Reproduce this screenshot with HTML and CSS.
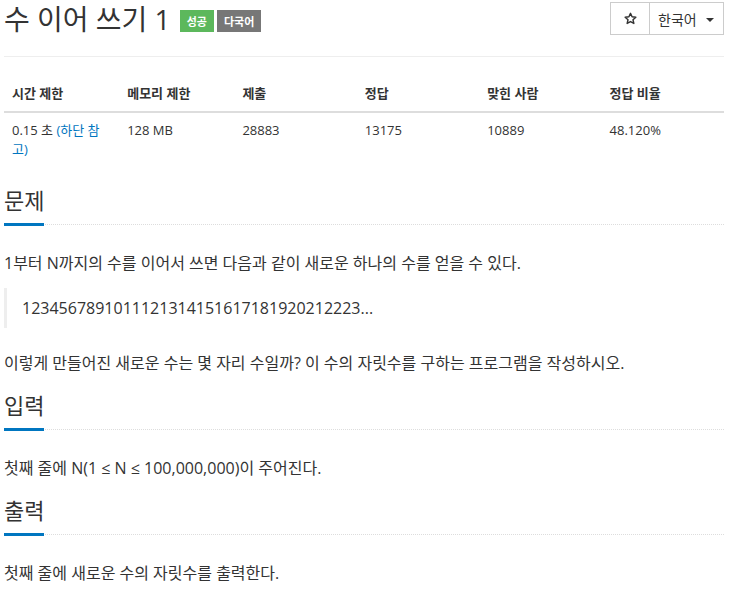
FILE: index.html
```html
<!DOCTYPE html>
<html lang="ko">
<head>
    <meta charset="UTF-8">
    <meta name="viewport" content="width=device-width, initial-scale=1.0">
    <title>수 이어 쓰기 1</title>
    <link rel="stylesheet" href="styles.css">
</head>
<body>
    <div class="page">
        <div class="page-header">
            <h1 class="title">
                <span id="problem_title">수 이어 쓰기 1</span>
                <span class="labels">
                    <span class="label label-success">성공</span>
                    <span class="label label-default">다국어</span>
                </span>
            </h1>
            <div class="btn-group">
                <button class="btn btn-star" title="즐겨찾기">
                    <svg width="13" height="13" viewBox="0 0 24 24">
                        <path d="M12 2.5l2.9 6.4 7 .7-5.3 4.7 1.6 6.9L12 17.6l-6.2 3.6 1.6-6.9-5.3-4.7 7-.7z" fill="none" stroke="#333" stroke-width="2.6" stroke-linejoin="round"/>
                    </svg>
                </button>
                <button class="btn btn-lang">한국어 <span class="caret"></span></button>
            </div>
        </div>

        <table class="problem-info">
            <thead>
                <tr>
                    <th style="width: 16%">시간 제한</th>
                    <th style="width: 16%">메모리 제한</th>
                    <th style="width: 17%">제출</th>
                    <th style="width: 17%">정답</th>
                    <th style="width: 17%">맞힌 사람</th>
                    <th style="width: 17%">정답 비율</th>
                </tr>
            </thead>
            <tbody>
                <tr>
                    <td>0.15 초 <a href="#">(하단 참고)</a></td>
                    <td>128 MB</td>
                    <td>28883</td>
                    <td>13175</td>
                    <td>10889</td>
                    <td>48.120%</td>
                </tr>
            </tbody>
        </table>

        <section class="problem-section">
            <div class="headline">
                <h2>문제</h2>
            </div>
            <div class="problem-text">
                <p>1부터 N까지의 수를 이어서 쓰면 다음과 같이 새로운 하나의 수를 얻을 수 있다.</p>
                <blockquote>
                    <p>1234567891011121314151617181920212223...</p>
                </blockquote>
                <p>이렇게 만들어진 새로운 수는 몇 자리 수일까? 이 수의 자릿수를 구하는 프로그램을 작성하시오.</p>
            </div>
        </section>

        <section class="problem-section">
            <div class="headline">
                <h2>입력</h2>
            </div>
            <div class="problem-text">
                <p>첫째 줄에 N(1 ≤ N ≤ 100,000,000)이 주어진다.</p>
            </div>
        </section>

        <section class="problem-section">
            <div class="headline">
                <h2>출력</h2>
            </div>
            <div class="problem-text">
                <p>첫째 줄에 새로운 수의 자릿수를 출력한다.</p>
            </div>
        </section>
    </div>
</body>
</html>
```

FILE: styles.css
```css
body {
    margin: 0;
    background-color: #fff;
    color: #333;
    font-family: "Open Sans", "Noto Sans CJK KR", sans-serif;
    font-size: 14px;
}

.page {
    padding: 0 8px 0 4px;
}

a {
    color: #0076c0;
    text-decoration: none;
}

/* header */

.page-header {
    display: flex;
    justify-content: space-between;
    align-items: flex-start;
    height: 56px;
    border-bottom: 1px solid #eee;
    margin-bottom: 18px;
}

.title {
    display: flex;
    align-items: center;
    margin: 0;
    font-size: 28px;
    font-weight: normal;
    line-height: 38px;
    color: #333;
}

.labels {
    display: flex;
    gap: 3px;
    margin-left: 9px;
    margin-top: 4px;
}

.label {
    padding: 6px 7px 5px;
    font-size: 11px;
    line-height: 11px;
    font-weight: bold;
    color: #fff;
}

.label-success {
    background-color: #5cb85c;
}

.label-default {
    background-color: #777;
}

.btn-group {
    display: flex;
    margin-top: 2px;
}

.btn {
    height: 33px;
    background-color: #fff;
    border: 1px solid #ccc;
    color: #333;
    font-family: "Open Sans", "Noto Sans CJK KR", sans-serif;
    font-size: 14px;
    padding: 0 12px;
    cursor: pointer;
}

.btn-star {
    width: 40px;
    display: flex;
    align-items: center;
    justify-content: center;
    padding: 0;
}

.btn-lang {
    width: 75px;
    margin-left: -1px;
    display: flex;
    align-items: center;
    justify-content: space-between;
    padding: 0 9px 0 8px;
}

.caret {
    width: 0;
    height: 0;
    border-top: 4px solid #333;
    border-left: 4px solid transparent;
    border-right: 4px solid transparent;
    margin-top: 2px;
}

/* info table */

.problem-info {
    width: 100%;
    border-collapse: collapse;
    margin-bottom: 16px;
    font-size: 13px;
}

.problem-info th,
.problem-info td {
    text-align: left;
    padding: 8px;
    line-height: 20px;
    vertical-align: top;
}

.problem-info td {
    line-height: 19px;
}

.problem-info th {
    font-weight: bold;
    border-bottom: 2px solid #ddd;
}

/* sections */

.problem-section {
    padding-top: 4px;
}

.headline {
    display: flex;
    border-bottom: 1px dotted #ddd;
    margin-bottom: 23px;
}

.headline h2 {
    margin: 0 0 -2px 0;
    padding-bottom: 10px;
    font-size: 22px;
    font-weight: normal;
    line-height: 26px;
    color: #333;
    border-bottom: 3px solid #0076c0;
}

.problem-text {
    font-size: 16px;
}

.problem-text p {
    margin: 0 0 10px 0;
    line-height: 30px;
}

.problem-text blockquote {
    margin: 0 0 20px 0;
    padding: 7px 15px;
    border-left: 3px solid #eee;
    font-size: 16px;
}

.problem-text blockquote p {
    margin: 0;
    line-height: 26px;
}
```
